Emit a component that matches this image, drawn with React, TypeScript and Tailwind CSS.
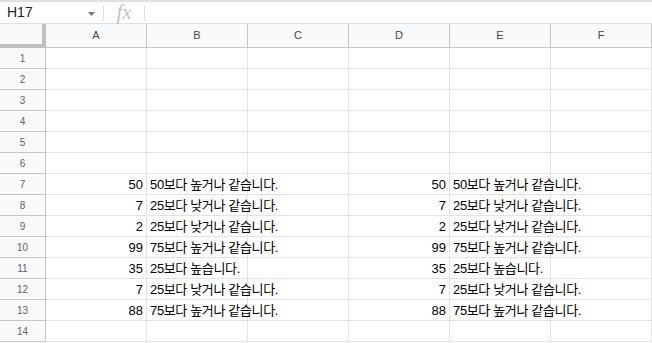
const cols = ['A', 'B', 'C', 'D', 'E', 'F']

const data: Record<number, [number, string]> = {
  7: [50, '50보다 높거나 같습니다.'],
  8: [7, '25보다 낮거나 같습니다.'],
  9: [2, '25보다 낮거나 같습니다.'],
  10: [99, '75보다 높거나 같습니다.'],
  11: [35, '25보다 높습니다.'],
  12: [7, '25보다 낮거나 같습니다.'],
  13: [88, '75보다 높거나 같습니다.'],
}

const font = { fontFamily: '"Liberation Sans", "Noto Sans CJK KR", sans-serif' }

function Row({ n }: { n: number }) {
  const d = data[n]
  const cells: (string | number | null)[] = d ? [d[0], d[1], null, d[0], d[1], null] : [null, null, null, null, null, null]
  return (
    <>
      <div className="flex h-[21px] items-center justify-center border-b border-r border-[#c4c7c5] bg-[#f8f9fa] pt-[1px] text-[10px] text-[#5f6368]">
        {n}
      </div>
      {cells.map((c, i) => (
        <div
          key={i}
          className={
            'relative h-[21px] border-b border-r border-[#e2e3e3] pt-[1px] text-[13px] leading-[20px] text-black ' +
            (typeof c === 'number' ? 'pr-[3px] text-right' : 'pl-[3px]')
          }
        >
          {typeof c === 'string' ? (
            <span className="absolute left-[3px] top-[1px] z-10 whitespace-nowrap tracking-[-0.35px]">{c}</span>
          ) : (
            c
          )}
        </div>
      ))}
    </>
  )
}

export default function App() {
  return (
    <div className="h-[343px] w-[652px] overflow-hidden bg-white" style={font}>
      <div className="flex h-[24px] items-center border-t-2 border-b border-[#e0e0e0]">
        <div className="flex w-[103px] items-center justify-between pl-[7px] pr-[8px] text-[14px] text-[#222]">
          <span>H17</span>
          <svg width="7" height="4" viewBox="0 0 7 4" className="mt-[2px]">
            <path d="M0 0h7L3.5 4z" fill="#777" />
          </svg>
        </div>
        <div className="h-[16px] w-px bg-[#e0e0e0]" />
        <div
          className="flex w-[40px] items-center justify-center text-[21px] italic text-[#c4c4c4]"
          style={{ fontFamily: '"Liberation Serif", serif' }}
        >
          fx
        </div>
        <div className="h-[16px] w-px bg-[#e0e0e0]" />
      </div>
      <div className="grid grid-cols-[46px_repeat(6,101px)]">
        <div className="h-[24px] border-b-[4px] border-r-[4px] border-[#c0c0c0] bg-[#f8f9fa]" />
        {cols.map((c) => (
          <div
            key={c}
            className="flex h-[24px] items-center justify-center border-b border-r border-[#c4c7c5] bg-[#f8f9fa] text-[11px] text-[#444]"
          >
            {c}
          </div>
        ))}
        {Array.from({ length: 14 }, (_, i) => (
          <Row key={i} n={i + 1} />
        ))}
      </div>
    </div>
  )
}
